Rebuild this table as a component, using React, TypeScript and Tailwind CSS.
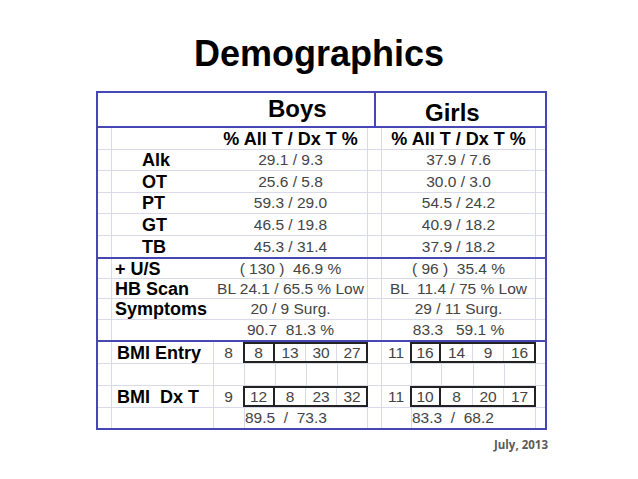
const COLS =
  "grid grid-cols-[14px_102px_31px_31px_31px_31px_30px_14px_30px_30px_32px_31px_31px_9px]";

const upperRows = [
  { label: "Alk", boys: "29.1 / 9.3", girls: "37.9 / 7.6" },
  { label: "OT", boys: "25.6 / 5.8", girls: "30.0 / 3.0" },
  { label: "PT", boys: "59.3 / 29.0", girls: "54.5 / 24.2" },
  { label: "GT", boys: "46.5 / 19.8", girls: "40.9 / 18.2" },
  { label: "TB", boys: "45.3 / 31.4", girls: "37.9 / 18.2" },
];

const midRows = [
  { label: "+ U/S", boys: "( 130 )  46.9 %", girls: "( 96 )  35.4 %", h: "h-[20px]" },
  { label: "HB Scan", boys: "BL 24.1 / 65.5 % Low", girls: "BL  11.4 / 75 % Low", h: "h-[20px]" },
  { label: "Symptoms", boys: "20 / 9 Surg.", girls: "29 / 11 Surg.", h: "h-[21px]" },
  { label: "", boys: "90.7  81.3 %", girls: "83.3   59.1 %", h: "h-[20px]" },
];

function SplitRow({
  label,
  boys,
  girls,
  h,
  bold,
  indent,
  last,
}: {
  label: string;
  boys: string;
  girls: string;
  h: string;
  bold?: boolean;
  indent?: string;
  last?: boolean;
}) {
  const val = bold
    ? "text-[18px] font-bold text-black"
    : "text-[15.5px] text-[#444]";
  return (
    <div className={`${COLS} ${h} ${last ? "" : "border-b border-[#d8dae9]"}`}>
      <div className="border-r border-[#d8dae9]" />
      <div className={`${indent} text-[18px] font-bold text-black leading-none flex items-center whitespace-nowrap`}>
        {label}
      </div>
      <div className={`col-span-5 border-r border-[#d8dae9] flex items-center justify-center whitespace-pre leading-none ${val}`}>
        {boys}
      </div>
      <div className="border-r border-[#d8dae9]" />
      <div className={`col-span-5 border-r border-[#d8dae9] flex items-center justify-center whitespace-pre leading-none ${val}`}>
        {girls}
      </div>
      <div />
    </div>
  );
}

function Cell({ v, cls = "" }: { v: string; cls?: string }) {
  return (
    <div className={`flex items-center justify-center text-[15.5px] text-[#444] leading-none ${cls}`}>
      {v}
    </div>
  );
}

function BmiRow({ label, boys, girls }: { label: string; boys: string[]; girls: string[] }) {
  return (
    <div className={`${COLS} h-[22px] border-b border-[#d8dae9]`}>
      <div className="border-r border-[#d8dae9]" />
      <div className="pl-[5px] text-[18px] font-bold text-black leading-none flex items-center whitespace-pre border-r border-[#d8dae9]">
        {label}
      </div>
      <Cell v={boys[0]} cls="border-r-2 border-[#222]" />
      <div className="col-span-4 grid grid-cols-[31px_31px_31px_30px] border-y-2 border-r-2 border-[#222] -ml-px">
        <Cell v={boys[1]} cls="border-r-2 border-[#222]" />
        <Cell v={boys[2]} cls="border-r border-[#d8dae9]" />
        <Cell v={boys[3]} cls="border-r border-[#d8dae9]" />
        <Cell v={boys[4]} />
      </div>
      <div className="border-r border-[#d8dae9]" />
      <Cell v={girls[0]} cls="border-r-2 border-[#222]" />
      <div className="col-span-4 grid grid-cols-[30px_32px_31px_31px] border-y-2 border-r-2 border-[#222] -ml-px">
        <Cell v={girls[1]} cls="border-r-2 border-[#222]" />
        <Cell v={girls[2]} cls="border-r border-[#d8dae9]" />
        <Cell v={girls[3]} cls="border-r border-[#d8dae9]" />
        <Cell v={girls[4]} />
      </div>
      <div />
    </div>
  );
}

function EmptyRow() {
  return (
    <div className={`${COLS} h-[22px] border-b border-[#d8dae9]`}>
      {Array.from({ length: 13 }).map((_, i) => (
        <div key={i} className="border-r border-[#d8dae9]" />
      ))}
      <div />
    </div>
  );
}

export default function App() {
  return (
    <div className="w-[638px] h-[479px] bg-white font-['Liberation_Sans',Arial,sans-serif] text-black">
      <h1 className="pt-[34px] text-center text-[36px] font-bold leading-[40px]">Demographics</h1>

      <div className="ml-[96px] mt-[17px] w-[451px] border-2 border-[#4646b4]">
        {/* header */}
        <div className="flex h-[35px] border-b-2 border-[#4646b4]">
          <div className="w-[278px] border-r-2 border-[#4646b4] pl-[170px] pt-[4px] text-[24px] font-bold leading-none">
            Boys
          </div>
          <div className="flex-1 pl-[49px] pt-[8px] text-[24px] font-bold leading-none">Girls</div>
        </div>

        {/* per-tumour rates */}
        <div className="border-b-2 border-[#4646b4]">
          <SplitRow label="" boys="% All T / Dx T %" girls="% All T / Dx T %" h="h-[22px]" bold />
          {upperRows.map((r, i) => (
            <SplitRow
              key={r.label}
              label={r.label}
              boys={r.boys}
              girls={r.girls}
              h={i % 2 === 0 ? "h-[21px]" : "h-[22px]"}
              indent="pl-[30px]"
              last={i === upperRows.length - 1}
            />
          ))}
        </div>

        {/* imaging */}
        <div className="border-b-2 border-[#4646b4]">
          {midRows.map((r, i) => (
            <SplitRow
              key={i}
              label={r.label}
              boys={r.boys}
              girls={r.girls}
              h={r.h}
              indent="pl-[3px]"
              last={i === midRows.length - 1}
            />
          ))}
        </div>

        {/* BMI */}
        <BmiRow label="BMI Entry" boys={["8", "8", "13", "30", "27"]} girls={["11", "16", "14", "9", "16"]} />
        <EmptyRow />
        <BmiRow label="BMI  Dx T" boys={["9", "12", "8", "23", "32"]} girls={["11", "10", "8", "20", "17"]} />
        <div className={`${COLS} h-[20px]`}>
          <div className="border-r border-[#d8dae9]" />
          <div className="border-r border-[#d8dae9]" />
          <div className="border-r border-[#d8dae9]" />
          <div className="col-span-4 border-r border-[#d8dae9] flex items-center whitespace-pre text-[15.5px] text-[#444] leading-none">
            89.5  /  73.3
          </div>
          <div className="border-r border-[#d8dae9]" />
          <div className="border-r border-[#d8dae9]" />
          <div className="col-span-4 border-r border-[#d8dae9] flex items-center whitespace-pre text-[15.5px] text-[#444] leading-none">
            83.3  /  68.2
          </div>
          <div />
        </div>
      </div>

      <div className="flex justify-end pr-[90px] pt-[6px]">
        <span className="font-['Open_Sans',sans-serif] text-[11.5px] font-bold text-[#5a5a5a]">July, 2013</span>
      </div>
    </div>
  );
}
